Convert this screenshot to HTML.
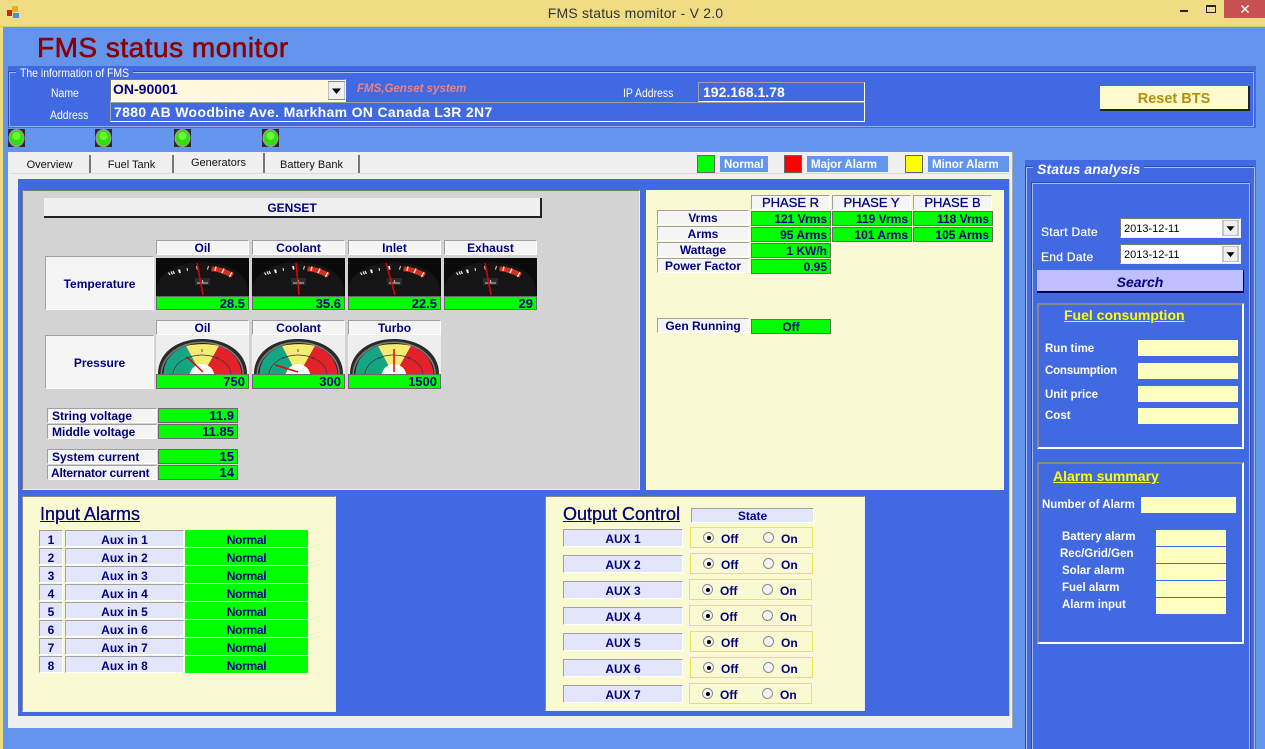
<!DOCTYPE html>
<html><head><meta charset="utf-8"><title>FMS status momitor - V 2.0</title>
<style>
html{margin:0;padding:0;overflow:hidden;width:1265px;height:749px}
body{margin:0;padding:0;width:1265px;height:749px;overflow:hidden;position:relative;background:#6495ed;font:bold 12px/1 "Liberation Sans",sans-serif;color:#00007f}
div,span,svg{position:absolute;box-sizing:border-box}
svg{display:block}
.c,.l,.r,.w{display:flex;align-items:center;white-space:nowrap}
.c{justify-content:center}
.r{justify-content:flex-end;padding-right:3px}
.s{border:1px solid;border-color:#a0a0a0 #fff #fff #a0a0a0}
.h{background:#f5f5f5}
.v{background:#0f0;border:1px solid #696969;font-size:13px}
.lv{background:#e3e6fa;padding-top:2px}
.nr{background:#0f0;letter-spacing:-.3px;padding-top:2px}
.w{color:#fff}
.n{font-weight:normal}
.y{background:#ffffc0}
.rb{border:1px solid #eee24f}
.rd{width:11px;height:11px;border-radius:50%;background:#f4f4f4;border:1px solid #8a8a8a;top:4px}
.rd i{position:absolute;left:3px;top:3px;width:4px;height:4px;border-radius:50%;background:#000}
.t{font-size:12px;top:5px;height:13px}
.tab{background:#f0f0f0;border-right:2px solid #777;font-weight:normal;color:#111;font-size:11px;padding-top:3px}
.led{width:17px;height:18px}
.cn{transform:scaleX(.87);transform-origin:0 50%;font-weight:normal;font-size:12px;height:12px}
.lg{background:#6495ed;padding-left:4px;font-size:11.500px;padding-top:3px;height:16px;top:156px}
.box{border:2px solid;border-color:#888 #fff #fff #888}
.f{font-size:11.500px;height:12px}
.ttl{font-size:18px;font-weight:normal;-webkit-text-stroke:.3px #00007f;text-decoration:underline;white-space:nowrap;height:20px;top:505px}
</style></head>
<body>
<svg width="0" height="0" style="position:absolute">
<defs>
<symbol id="tg" viewBox="0 0 93 38">
<rect width="93" height="38" fill="#0a0a0a"/>
<ellipse cx="46" cy="32" rx="46" ry="28" fill="#151515"/>
<g stroke="#f0f0f0" fill="none">
<path d="M12.500 14.500l1.500 2.500M15 13.500l1.500 3M17 13l1.500 3" stroke-width="1.200"/>
<path d="M23 11.500l1 3.500" stroke-width="2"/>
<path d="M31 10l.5 3" stroke-width="1"/>
<path d="M41 8l.7 3.500" stroke-width="1.800"/>
<path d="M52.500 8l-1 3.500" stroke-width="1"/>
</g>
<path d="M56 8.500Q68 9 78 15.500L75 19.500Q65 14 55 13Z" fill="#d8301a"/>
<path d="M60 8.500l-1 4.500M68 10.500l-2 4.500M76 14l-2.500 5" stroke="#f2f2f2" stroke-width="1.300"/>
<rect x="39" y="20" width="15" height="7" fill="#2c2c2c"/>
<path d="M41 25h11M46.500 22v3" stroke="#aaa" stroke-width="1.200"/>
</symbol>
<symbol id="pg" viewBox="0 0 93 39">
<rect width="93" height="39" fill="#eeeeee"/>
<path d="M2 39C2 17 22 4 46 4S91 17 91 39Z" fill="#2a2a2a"/>
<path d="M4.500 39C5 20 24 6.500 46 6.500S87.500 20 88 39Z" fill="#7d7d7d"/>
<path d="M6 39C6.500 21 25 8 46 8S86 21 86.500 39Z" fill="#222"/>
<path d="M7.500 39C8 24 18 15 30 11L46 41Z" fill="#14a585"/>
<path d="M30 11C40 8.500 54 8.500 63 11L46 41Z" fill="#f6ec70"/>
<path d="M63 11C76 16 85 26 85.500 39H46L46 41Z" fill="#e5222a"/>
<path d="M17 39C18 28 31 20 46 20S74 28 75 39" fill="none" stroke="#333" stroke-width=".7"/>
<path d="M46 14v3M30 22l2 2M62 22l-2 2" stroke="#333" stroke-width=".8"/>
<circle cx="46" cy="41.500" r="12.500" fill="#fff"/>
</symbol>
<symbol id="ld" viewBox="0 0 17 18">
<rect width="17" height="18" fill="#2b2b2b"/>
<ellipse cx="8.500" cy="9" rx="8" ry="9" fill="#9b9b9b"/>
<ellipse cx="8.500" cy="9" rx="6.500" ry="7.500" fill="#2fe00f"/>
<ellipse cx="8.500" cy="7" rx="4" ry="4" fill="#66ff33"/>
</symbol>
<symbol id="dd" viewBox="0 0 17 18">
<rect width="17" height="18" fill="#f0f0f0" stroke="#8a8a8a"/>
<path d="M4 7h9L8.500 12.500Z" fill="#000"/>
</symbol>
</defs>
</svg>

<!-- title bar -->
<div style="left:0;top:0;width:1265px;height:27px;background:#f0dc82;border-bottom:1px solid #d8c878"></div>
<div style="left:0;top:27px;width:3px;height:722px;background:#f0dc82"></div>
<div style="left:12px;top:6px;width:6px;height:6px;background:#e8b020"></div>
<div style="left:7px;top:10px;width:5px;height:6px;background:#d02020"></div>
<div style="left:13px;top:13px;width:6px;height:5px;background:#4a90e0"></div>
<div class="c n" style="left:0;top:5px;width:1271px;height:16px;font-size:14px;color:#333;letter-spacing:.2px">FMS status momitor - V 2.0</div>
<div style="left:1180px;top:10px;width:8px;height:2px;background:#222"></div>
<div style="left:1206px;top:5px;width:10px;height:8px;border:1px solid #222;border-top-width:2px"></div>
<div style="left:1224px;top:0;width:41px;height:18px;background:#c75050"></div>
<svg style="left:1241px;top:5px" width="8" height="8" viewBox="0 0 8 8"><path d="M.5.500l7 7M7.500.500l-7 7" stroke="#fff" stroke-width="1.500"/></svg>

<div style="left:37px;top:34px;font-size:28px;font-weight:normal;color:#8b0000;-webkit-text-stroke:.6px #8b0000;letter-spacing:.5px;white-space:nowrap">FMS status monitor</div>

<!-- info group -->
<div style="left:8px;top:66px;width:1248px;height:62px;background:#4169e1"></div>
<div style="left:9px;top:72px;width:1245px;height:55px;border:1px solid #95aef0;border-top-color:#a9bdf3;box-shadow:-1px -1px 0 #2a4ab0"></div>
<div style="left:16px;top:66px;width:117px;height:13px;background:#4169e1"></div>
<div class="w cn" style="left:20px;top:67px">The information of FMS</div>
<div class="w cn" style="left:51px;top:87px">Name</div>
<div class="w cn" style="left:50px;top:109px">Address</div>
<div class="w cn" style="left:623px;top:87px">IP Address</div>
<div style="left:110px;top:79px;width:236px;height:23px;background:#fff8dc;border:1px solid;border-color:#7a7a7a #fff #fff #7a7a7a"></div>
<div class="l" style="left:113px;top:82px;height:13px;font-size:14px;color:#00007f">ON-90001</div>
<svg style="left:328px;top:81px" width="17" height="19"><use href="#dd"/></svg>
<div class="l" style="left:357px;top:84px;height:12px;font-size:11.500px;font-style:italic;color:#f08080">FMS,Genset system</div>
<div style="left:698px;top:82px;width:167px;height:20px;border:1px solid;border-color:#a0a0a0 #fff #fff #a0a0a0"></div>
<div class="w" style="left:703px;top:85px;height:14px;font-size:14px">192.168.1.78</div>
<div style="left:110px;top:102px;width:755px;height:20px;border:1px solid;border-color:#a0a0a0 #fff #fff #a0a0a0"></div>
<div class="w" style="left:114px;top:105px;height:14px;font-size:14px;letter-spacing:.33px">7880 AB Woodbine Ave. Markham ON Canada L3R 2N7</div>
<div class="c" style="left:1100px;top:86px;width:150px;height:25px;background:#fffacd;border-right:2px solid #222;border-bottom:2px solid #222;color:#b0900a;font-size:14.500px;padding-top:3px">Reset BTS</div>

<!-- LEDs -->
<svg class="led" style="left:8px;top:129px"><use href="#ld"/></svg>
<svg class="led" style="left:95px;top:129px"><use href="#ld"/></svg>
<svg class="led" style="left:174px;top:129px"><use href="#ld"/></svg>
<svg class="led" style="left:262px;top:129px"><use href="#ld"/></svg>

<!-- tab control -->
<div style="left:8px;top:152px;width:1005px;height:576px;background:#f0f0f0;border-right:1px solid #aaa"></div>
<div class="c tab" style="left:10px;top:155px;width:81px;height:18px">Overview</div>
<div class="c tab" style="left:91px;top:155px;width:83px;height:18px">Fuel Tank</div>
<div class="c tab" style="left:174px;top:153px;width:91px;height:20px;padding-top:1px">Generators</div>
<div class="c tab" style="left:265px;top:155px;width:95px;height:18px">Battery Bank</div>
<div style="left:10px;top:173px;width:1000px;height:1px;background:#dcdcdc"></div>

<div style="left:697px;top:155px;width:18px;height:18px;background:#0f0;border:1px solid #666"></div>
<div class="w lg" style="left:720px;width:48px">Normal</div>
<div style="left:784px;top:155px;width:18px;height:18px;background:#f00;border:1px solid #666"></div>
<div class="w lg" style="left:807px;width:81px">Major Alarm</div>
<div style="left:905px;top:155px;width:18px;height:18px;background:#ff0;border:1px solid #666"></div>
<div class="w lg" style="left:928px;width:81px">Minor Alarm</div>

<div style="left:18px;top:179px;width:992px;height:537px;background:#4169e1;border-right:1px solid #ccc"></div>

<!-- gray panel -->
<div style="left:22px;top:190px;width:618px;height:300px;background:#d3d3d3;border:1px solid;border-color:#777 #eee #eee #777"></div>
<div class="c" style="left:44px;top:198px;width:498px;height:20px;background:#f0f0f0;border-right:2px solid #222;border-bottom:2px solid #222;padding-top:2px">GENSET</div>

<div class="c s h" style="left:156px;top:240px;width:93px;height:15px">Oil</div>
<div class="c s h" style="left:252px;top:240px;width:93px;height:15px">Coolant</div>
<div class="c s h" style="left:348px;top:240px;width:93px;height:15px">Inlet</div>
<div class="c s h" style="left:444px;top:240px;width:93px;height:15px">Exhaust</div>
<div class="c s h" style="left:45px;top:256px;width:109px;height:54px;padding-top:2px">Temperature</div>

<svg style="left:156px;top:258px" width="93" height="38"><use href="#tg"/><path d="M41 5L47 37" stroke="#e80000" stroke-width="1.500"/></svg>
<svg style="left:252px;top:258px" width="93" height="38"><use href="#tg"/><path d="M44 5L47 37" stroke="#e80000" stroke-width="1.500"/></svg>
<svg style="left:348px;top:258px" width="93" height="38"><use href="#tg"/><path d="M38 5L47 37" stroke="#e80000" stroke-width="1.500"/></svg>
<svg style="left:444px;top:258px" width="93" height="38"><use href="#tg"/><path d="M41 5L47 37" stroke="#e80000" stroke-width="1.500"/></svg>
<div class="r v" style="left:156px;top:296px;width:93px;height:14px">28.5</div>
<div class="r v" style="left:252px;top:296px;width:93px;height:14px">35.6</div>
<div class="r v" style="left:348px;top:296px;width:93px;height:14px">22.5</div>
<div class="r v" style="left:444px;top:296px;width:93px;height:14px">29</div>

<div class="c s h" style="left:156px;top:320px;width:93px;height:15px">Oil</div>
<div class="c s h" style="left:252px;top:320px;width:93px;height:15px">Coolant</div>
<div class="c s h" style="left:348px;top:320px;width:93px;height:15px">Turbo</div>
<div class="c s h" style="left:45px;top:335px;width:109px;height:54px;padding-top:2px">Pressure</div>

<svg style="left:156px;top:335px" width="93" height="39"><use href="#pg"/><path d="M31 22L47 37" stroke="#f00000" stroke-width="1.500"/></svg>
<svg style="left:252px;top:335px" width="93" height="39"><use href="#pg"/><path d="M23 30L46 37" stroke="#f00000" stroke-width="1.500"/></svg>
<svg style="left:348px;top:335px" width="93" height="39"><use href="#pg"/><path d="M46 14V37" stroke="#f00000" stroke-width="1.500"/></svg>
<div class="r v" style="left:156px;top:374px;width:93px;height:15px">750</div>
<div class="r v" style="left:252px;top:374px;width:93px;height:15px">300</div>
<div class="r v" style="left:348px;top:374px;width:93px;height:15px">1500</div>

<div class="l s h" style="left:47px;top:408px;width:110px;height:15px;padding-left:4px;display:flex;align-items:center">String voltage</div>
<div class="l s h" style="left:47px;top:424px;width:110px;height:15px;padding-left:4px;display:flex;align-items:center">Middle voltage</div>
<div class="l s h" style="left:47px;top:449px;width:110px;height:15px;padding-left:4px;display:flex;align-items:center">System current</div>
<div class="l s h" style="left:47px;top:465px;width:110px;height:15px;padding-left:3px;display:flex;align-items:center;letter-spacing:-.2px">Alternator current</div>
<div class="r v" style="left:158px;top:408px;width:80px;height:15px">11.9</div>
<div class="r v" style="left:158px;top:424px;width:80px;height:15px">11.85</div>
<div class="r v" style="left:158px;top:449px;width:80px;height:15px">15</div>
<div class="r v" style="left:158px;top:465px;width:80px;height:15px">14</div>

<!-- cream panel -->
<div style="left:646px;top:190px;width:358px;height:300px;background:#fafad2"></div>
<div class="c s h" style="left:751px;top:195px;width:79px;height:15px;font-size:13px;font-weight:normal;-webkit-text-stroke:.3px #00007f">PHASE R</div>
<div class="c s h" style="left:832px;top:195px;width:79px;height:15px;font-size:13px;font-weight:normal;-webkit-text-stroke:.3px #00007f">PHASE Y</div>
<div class="c s h" style="left:913px;top:195px;width:79px;height:15px;font-size:13px;font-weight:normal;-webkit-text-stroke:.3px #00007f">PHASE B</div>
<div class="c s h" style="left:657px;top:210px;width:92px;height:15px">Vrms</div>
<div class="c s h" style="left:657px;top:226px;width:92px;height:15px">Arms</div>
<div class="c s h" style="left:657px;top:242px;width:92px;height:15px">Wattage</div>
<div class="c s h" style="left:657px;top:258px;width:92px;height:15px">Power Factor</div>
<div class="c s h" style="left:657px;top:318px;width:92px;height:15px">Gen Running</div>
<div class="r v" style="left:751px;top:211px;width:80px;height:15px;font-size:12px">121 Vrms</div>
<div class="r v" style="left:832px;top:211px;width:80px;height:15px;font-size:12px">119 Vrms</div>
<div class="r v" style="left:913px;top:211px;width:80px;height:15px;font-size:12px">118 Vrms</div>
<div class="r v" style="left:751px;top:227px;width:80px;height:15px;font-size:12px">95 Arms</div>
<div class="r v" style="left:832px;top:227px;width:80px;height:15px;font-size:12px">101 Arms</div>
<div class="r v" style="left:913px;top:227px;width:80px;height:15px;font-size:12px">105 Arms</div>
<div class="r v" style="left:751px;top:243px;width:80px;height:15px;font-size:12px">1 KW/h</div>
<div class="r v" style="left:751px;top:259px;width:80px;height:15px;font-size:12px">0.95</div>
<div class="c v" style="left:751px;top:319px;width:80px;height:15px;font-size:12px">Off</div>

<!-- input alarms -->
<div style="left:22px;top:496px;width:314px;height:216px;background:#fafad2;border:1px solid;border-color:#888 #eee #eee #888"></div>
<div class="ttl" style="left:40px">Input Alarms</div>

<div class="c s lv" style="left:39px;top:530px;width:24px;height:17px">1</div><div class="c s lv" style="left:65px;top:530px;width:119px;height:17px">Aux in 1</div><div class="c nr" style="left:185px;top:530px;width:123px;height:17px">Normal</div>
<div class="c s lv" style="left:39px;top:548px;width:24px;height:17px">2</div><div class="c s lv" style="left:65px;top:548px;width:119px;height:17px">Aux in 2</div><div class="c nr" style="left:185px;top:548px;width:123px;height:17px">Normal</div>
<div class="c s lv" style="left:39px;top:566px;width:24px;height:17px">3</div><div class="c s lv" style="left:65px;top:566px;width:119px;height:17px">Aux in 3</div><div class="c nr" style="left:185px;top:566px;width:123px;height:17px">Normal</div>
<div class="c s lv" style="left:39px;top:584px;width:24px;height:17px">4</div><div class="c s lv" style="left:65px;top:584px;width:119px;height:17px">Aux in 4</div><div class="c nr" style="left:185px;top:584px;width:123px;height:17px">Normal</div>
<div class="c s lv" style="left:39px;top:602px;width:24px;height:17px">5</div><div class="c s lv" style="left:65px;top:602px;width:119px;height:17px">Aux in 5</div><div class="c nr" style="left:185px;top:602px;width:123px;height:17px">Normal</div>
<div class="c s lv" style="left:39px;top:620px;width:24px;height:17px">6</div><div class="c s lv" style="left:65px;top:620px;width:119px;height:17px">Aux in 6</div><div class="c nr" style="left:185px;top:620px;width:123px;height:17px">Normal</div>
<div class="c s lv" style="left:39px;top:638px;width:24px;height:17px">7</div><div class="c s lv" style="left:65px;top:638px;width:119px;height:17px">Aux in 7</div><div class="c nr" style="left:185px;top:638px;width:123px;height:17px">Normal</div>
<div class="c s lv" style="left:39px;top:656px;width:24px;height:17px">8</div><div class="c s lv" style="left:65px;top:656px;width:119px;height:17px">Aux in 8</div><div class="c nr" style="left:185px;top:656px;width:123px;height:17px">Normal</div>

<!-- output control -->
<div style="left:545px;top:496px;width:320px;height:215px;background:#fafad2;border:1px solid;border-color:#888 #eee #eee #888"></div>
<div class="ttl" style="left:563px">Output Control</div>
<div class="c s lv" style="left:691px;top:508px;width:123px;height:15px;padding-top:0">State</div>

<div class="c s lv" style="left:563px;top:529px;width:120px;height:18px">AUX 1</div>
<div class="rb" style="left:690px;top:527px;width:123px;height:21px"><div class="rd" style="left:12px"><i></i></div><div class="t" style="left:30px">Off</div><div class="rd" style="left:72px"></div><div class="t" style="left:90px">On</div></div>
<div class="c s lv" style="left:563px;top:555px;width:120px;height:18px">AUX 2</div>
<div class="rb" style="left:690px;top:553px;width:123px;height:21px"><div class="rd" style="left:12px"><i></i></div><div class="t" style="left:30px">Off</div><div class="rd" style="left:72px"></div><div class="t" style="left:90px">On</div></div>
<div class="c s lv" style="left:563px;top:581px;width:120px;height:18px">AUX 3</div>
<div class="rb" style="left:689px;top:579px;width:123px;height:21px"><div class="rd" style="left:12px"><i></i></div><div class="t" style="left:30px">Off</div><div class="rd" style="left:72px"></div><div class="t" style="left:90px">On</div></div>
<div class="c s lv" style="left:563px;top:607px;width:120px;height:18px">AUX 4</div>
<div class="rb" style="left:689px;top:605px;width:123px;height:21px"><div class="rd" style="left:12px"><i></i></div><div class="t" style="left:30px">Off</div><div class="rd" style="left:72px"></div><div class="t" style="left:90px">On</div></div>
<div class="c s lv" style="left:563px;top:633px;width:120px;height:18px">AUX 5</div>
<div class="rb" style="left:690px;top:631px;width:123px;height:21px"><div class="rd" style="left:12px"><i></i></div><div class="t" style="left:30px">Off</div><div class="rd" style="left:72px"></div><div class="t" style="left:90px">On</div></div>
<div class="c s lv" style="left:563px;top:659px;width:120px;height:18px">AUX 6</div>
<div class="rb" style="left:690px;top:657px;width:123px;height:21px"><div class="rd" style="left:12px"><i></i></div><div class="t" style="left:30px">Off</div><div class="rd" style="left:72px"></div><div class="t" style="left:90px">On</div></div>
<div class="c s lv" style="left:563px;top:685px;width:120px;height:18px">AUX 7</div>
<div class="rb" style="left:689px;top:683px;width:123px;height:21px"><div class="rd" style="left:12px"><i></i></div><div class="t" style="left:30px">Off</div><div class="rd" style="left:72px"></div><div class="t" style="left:90px">On</div></div>

<!-- status analysis -->
<div style="left:1025px;top:160px;width:231px;height:589px;background:#4169e1"></div>
<div style="left:1026px;top:167px;width:229px;height:590px;border:1px solid #a9bdf3;box-shadow:-1px -1px 0 #2a4ab0"></div>
<div style="left:1032px;top:183px;width:218px;height:570px;border:1px solid #a9bdf3;box-shadow:1px 1px 0 #2a4ab0,-1px -1px 0 #2a4ab0"></div>
<div class="w" style="left:1033px;top:161px;height:15px;padding:0 4px;background:#4169e1;font-size:14px;font-style:italic;font-weight:bold;letter-spacing:.1px">Status analysis</div>

<div class="w" style="left:1041px;top:225px;height:13px;font-size:12px;font-weight:normal;-webkit-text-stroke:.2px #fff;letter-spacing:.3px">Start Date</div>
<div class="w" style="left:1041px;top:250px;height:13px;font-size:12px;font-weight:normal;-webkit-text-stroke:.2px #fff;letter-spacing:.3px">End Date</div>
<div class="l n" style="left:1120px;top:218px;width:121px;height:20px;background:#fff;border:1px solid;border-color:#7a7a7a #eee #eee #7a7a7a;color:#000;font-size:11px;padding:3px 0 0 3px;display:flex;align-items:center">2013-12-11</div>
<svg style="left:1222px;top:220px" width="17" height="16"><use href="#dd"/></svg>
<div class="l n" style="left:1120px;top:244px;width:121px;height:20px;background:#fff;border:1px solid;border-color:#7a7a7a #eee #eee #7a7a7a;color:#000;font-size:11px;padding:3px 0 0 3px;display:flex;align-items:center">2013-12-11</div>
<svg style="left:1222px;top:246px" width="17" height="16"><use href="#dd"/></svg>
<div class="c" style="left:1037px;top:270px;width:207px;height:23px;background:#bfbfff;border-right:1px solid #000050;border-bottom:2px solid #000050;font-size:14px;font-style:italic;padding-top:2px">Search</div>

<div class="box" style="left:1037px;top:303px;width:207px;height:146px"></div>
<div style="left:1064px;top:308px;height:15px;font-size:14px;color:#ff0;text-decoration:underline;white-space:nowrap">Fuel consumption</div>
<div class="y" style="left:1138px;top:340px;width:100px;height:16px"></div>
<div class="y" style="left:1138px;top:363px;width:100px;height:16px"></div>
<div class="y" style="left:1138px;top:386px;width:100px;height:16px"></div>
<div class="y" style="left:1138px;top:408px;width:100px;height:16px"></div>
<div class="w f" style="left:1045px;top:344px">Run time</div>
<div class="w f" style="left:1045px;top:366px;letter-spacing:-.2px">Consumption</div>
<div class="w f" style="left:1045px;top:390px">Unit price</div>
<div class="w f" style="left:1045px;top:411px">Cost</div>

<div class="box" style="left:1037px;top:462px;width:207px;height:182px"></div>
<div style="left:1053px;top:469px;height:15px;font-size:14px;color:#ff0;text-decoration:underline;white-space:nowrap">Alarm summary</div>
<div class="w f" style="left:1042px;top:500px">Number of Alarm</div>
<div class="y" style="left:1141px;top:497px;width:95px;height:16px"></div>
<div class="y" style="left:1156px;top:530px;width:70px;height:16px"></div>
<div class="y" style="left:1156px;top:547px;width:70px;height:16px"></div>
<div class="y" style="left:1156px;top:564px;width:70px;height:16px"></div>
<div class="y" style="left:1156px;top:581px;width:70px;height:16px"></div>
<div class="y" style="left:1156px;top:598px;width:70px;height:16px"></div>
<div class="w f" style="left:1062px;top:532px">Battery alarm</div>
<div class="w f" style="left:1060px;top:549px">Rec/Grid/Gen</div>
<div class="w f" style="left:1062px;top:566px">Solar alarm</div>
<div class="w f" style="left:1062px;top:583px">Fuel alarm</div>
<div class="w f" style="left:1062px;top:600px">Alarm input</div>
</body></html>
